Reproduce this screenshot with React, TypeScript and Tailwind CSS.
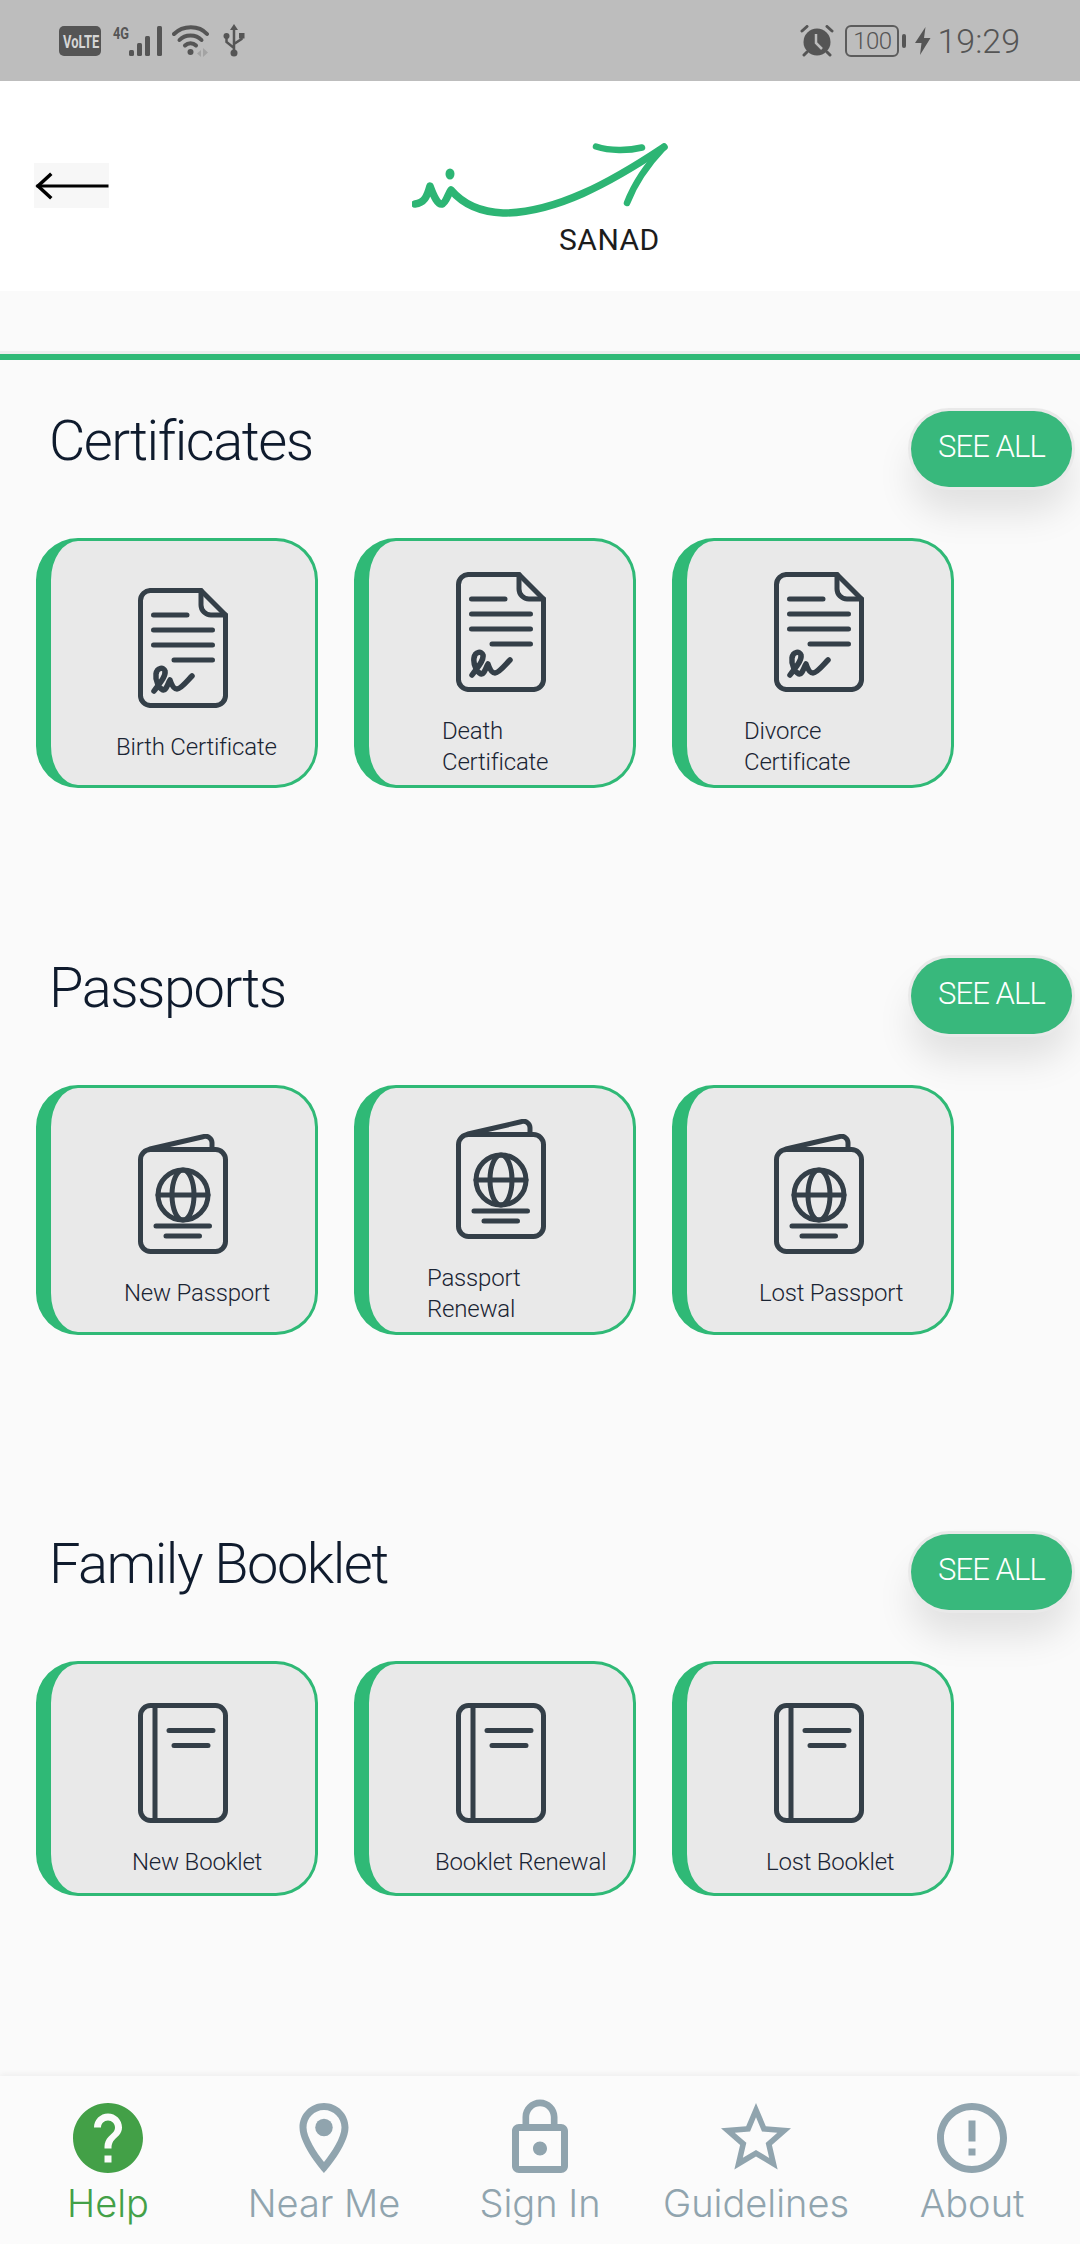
import React from "react";

const ink = "#343f48";

function DocIcon() {
  return (
    <svg width="90" height="120" viewBox="0 0 90 120" fill="none" stroke={ink} strokeWidth="5" strokeLinecap="round" strokeLinejoin="round">
      <path d="M63 2.5H13a10 10 0 0 0-10.500 10V107a10 10 0 0 0 10.500 10.500H77a10 10 0 0 0 10.500-10.500V27L63 2.500Z" />
      <path d="M63 2.500V17a10 10 0 0 0 10 10H87.500" />
      <path d="M15.500 27H49M15.500 42H74.500M15.500 57H74.500M36 72H74.500" />
      <path d="M16 103c5-7 12-14 11-20-1-4-8-4-9 3-1 7 3 14 7 16 3 1 5-7 7-10 1 3 3 9 7 9 4 0 11-9 15-13" strokeWidth="5.500" />
    </svg>
  );
}

function PassportIcon() {
  return (
    <svg width="90" height="120" viewBox="0 0 90 120" fill="none" stroke={ink} strokeWidth="5" strokeLinecap="round" strokeLinejoin="round">
      <path d="M12 15L65 2.800a6.500 6.500 0 0 1 9 6.200V15" />
      <rect x="2.500" y="15.500" width="85" height="102" rx="10" />
      <ellipse cx="45" cy="61" rx="25" ry="25" />
      <ellipse cx="45" cy="61" rx="11" ry="25" />
      <path d="M20 61H70M18 92H71.500M28 102H61.500" />
    </svg>
  );
}

function BookletIcon() {
  return (
    <svg width="90" height="120" viewBox="0 0 90 120" fill="none" stroke={ink} strokeWidth="5" strokeLinecap="round" strokeLinejoin="round">
      <rect x="2.500" y="2.500" width="85" height="115" rx="10" />
      <path d="M17 3V117" />
      <path d="M31 27.500H75M36 42.500H70" />
    </svg>
  );
}

function Card({ pad, left, height, children, text }: { pad: string; left: string; height: string; children: React.ReactNode; text: React.ReactNode }) {
  return (
    <div className={`box-border w-[282px] ${height} ${pad} shrink-0 overflow-hidden rounded-[42px] border-[3px] border-l-[15px] border-[#2fb976] bg-[#e9e9e9]`}>
      <div className="ml-[87px] h-[120px] w-[90px]">{children}</div>
      <div className={`${left} mt-[24px] text-[24px] font-light leading-[31px] tracking-[-0.2px] text-[#1a2433]`}>{text}</div>
    </div>
  );
}

function SectionHead({ title }: { title: string }) {
  return (
    <div className="flex items-start justify-between pl-[49px] pr-[8px]">
      <h2 className="mt-[0px] text-[56px] font-light leading-[60px] tracking-[-1.5px] text-[#0f1b2d]">{title}</h2>
      <button className="flex h-[76px] w-[161px] items-center justify-center rounded-full bg-[#38b87c] pb-[4px] text-[31px] font-light tracking-[-0.9px] text-white shadow-[0_0_0_3px_#e9e9e9,0_26px_36px_rgba(0,0,0,0.1)]">
        SEE ALL
      </button>
    </div>
  );
}

function NavItem({ label, active, d, extra }: { label: string; active?: boolean; d: string; extra?: React.ReactNode }) {
  return (
    <div className={`flex w-[216px] flex-col items-center ${active ? "text-[#43a047]" : "text-[#90a4ae]"}`}>
      <svg width="84" height="84" viewBox="0 0 24 24" fill="currentColor">
        <path d={d} />
        {extra}
      </svg>
      <span className="mt-[-2px] text-[38px] font-light leading-[50px]">{label}</span>
    </div>
  );
}

function StatusLeft() {
  return (
    <div className="flex items-center pl-[59px]">
      <svg width="42" height="30" viewBox="0 0 42 30">
        <rect width="42" height="30" rx="5" fill="#555" />
        <text transform="translate(4 22) scale(0.68 1)" fontSize="19" fontWeight="700" fill="#d6d6d6" fontFamily="Roboto, sans-serif">VoLTE</text>
      </svg>
      <svg className="ml-[11px]" width="51" height="32" viewBox="0 0 51 32" fill="#555">
        <text transform="translate(1 14) scale(0.8 1)" fontSize="16" fontWeight="700" fontFamily="Roboto, sans-serif">4G</text>
        <rect x="17" y="25" width="5" height="6" rx="1.500" />
        <rect x="25" y="18" width="5" height="13" rx="1.500" />
        <rect x="33" y="11" width="5" height="20" rx="1.500" />
        <rect x="45" y="1" width="5" height="30" rx="1.500" />
      </svg>
      <svg className="ml-[9px]" width="40" height="34" viewBox="0 0 40 34" fill="none" stroke="#555" strokeWidth="4" strokeLinecap="round">
        <path d="M2 10C11 1 27 1 35 10" />
        <path d="M7.500 16C13 10 24 10 29.500 16" />
        <path d="M13 21.500C16 18.500 21 18.500 24 21.500" />
        <circle cx="18.500" cy="28" r="3" fill="#555" stroke="none" />
        <path d="M29 26l-4 3.500 4 3.500z" fill="#a3a3a3" stroke="none" />
        <path d="M31 24v9l5-4.500z" fill="#a3a3a3" stroke="none" />
      </svg>
      <svg className="ml-[11px]" width="22" height="33" viewBox="0 0 22 33" fill="none" stroke="#555" strokeWidth="2.500">
        <path d="M11 4V28M11 24L3.500 18V13M11 20L18.500 15V12" />
        <path d="M11 0l4 6H7z" fill="#555" stroke="none" />
        <circle cx="11" cy="29" r="3.500" fill="#555" stroke="none" />
        <circle cx="3.500" cy="12" r="3" fill="#555" stroke="none" />
        <rect x="16" y="9" width="5.500" height="5.500" fill="#555" stroke="none" />
      </svg>
    </div>
  );
}

function StatusRight() {
  return (
    <div className="flex items-center pr-[60px] text-[#555]">
      <svg width="34" height="32" viewBox="0 0 34 32">
        <circle cx="17" cy="17" r="13.500" fill="#555" />
        <path d="M16 9V18L22 24" fill="none" stroke="#bdbdbd" strokeWidth="2.500" />
        <path d="M2 6L7 1.500M32 6L27 1.500M4 30L7 27M30 30L27 27" stroke="#555" strokeWidth="3" strokeLinecap="round" />
      </svg>
      <div className="ml-[11px] flex h-[32px] w-[54px] items-center justify-center rounded-[6px] border-[2px] border-[#5c5c5c] text-[24px] font-light leading-none tracking-[-0.5px]">
        100
      </div>
      <div className="ml-[3px] h-[14px] w-[4px] rounded-full bg-[#555]" />
      <svg className="ml-[9px]" width="16" height="28" viewBox="0 0 16 28" fill="#555">
        <path d="M10.500 0L0 16H6.500L5 28L15.500 11H9Z" />
      </svg>
      <span className="ml-[6px] text-[34px] font-light leading-none">19:29</span>
    </div>
  );
}

function Logo() {
  return (
    <div className="ml-[303px] flex h-[210px] w-[260px] flex-col">
      <svg className="mt-[59px]" width="260" height="80" viewBox="412 140 260 80" fill="none" stroke="#2db574" strokeWidth="7.500" strokeLinecap="round" strokeLinejoin="round">
        <path d="M415 204C424 203 427 197 430 186C434 197 438 205 442 204C446 203 448 194 451 190C462 203 480 212 503 213C555 213 610 183 664 147" />
        <path d="M664 147C647 165 635 182 627 203" strokeWidth="6.500" />
        <path d="M596 146.500C610 151 628 151 642 147.500" strokeWidth="6.500" />
        <ellipse cx="450" cy="174" rx="4.500" ry="5.500" fill="#2db574" stroke="none" />
      </svg>
      <span className="ml-[147px] mt-[2px] text-[30px] leading-[36px] tracking-[0.5px] text-[#1c1c1c]">SANAD</span>
    </div>
  );
}

const help = "M12 2C6.48 2 2 6.48 2 12s4.48 10 10 10 10-4.48 10-10S17.52 2 12 2zm1 17h-2v-2h2v2zm2.07-7.75l-.9.92C13.45 12.9 13 13.5 13 15h-2v-.5c0-1.1.45-2.1 1.17-2.83l1.24-1.26c.37-.36.59-.86.59-1.41 0-1.1-.9-2-2-2s-2 .9-2 2H8c0-2.21 1.79-4 4-4s4 1.79 4 4c0 .88-.36 1.68-.93 2.25z";
const place = "M12 2C8.13 2 5 5.13 5 9c0 5.25 7 13 7 13s7-7.75 7-13c0-3.87-3.13-7-7-7zM7 9c0-2.76 2.24-5 5-5s5 2.24 5 5c0 2.88-2.88 7.19-5 9.88C9.92 16.21 7 11.85 7 9z";
const lock = "M12 17c1.1 0 2-.9 2-2s-.9-2-2-2-2 .9-2 2 .9 2 2 2zm6-9h-1V6c0-2.76-2.24-5-5-5S7 3.24 7 6v2H6c-1.1 0-2 .9-2 2v10c0 1.1.9 2 2 2h12c1.1 0 2-.9 2-2V10c0-1.1-.9-2-2-2zM8.900 6c0-1.710 1.390-3.100 3.100-3.100s3.100 1.390 3.100 3.100v2H8.900V6zM18 20H6V10h12v10z";
const star = "M22 9.240l-7.190-.620L12 2 9.190 8.630 2 9.240l5.460 4.730L5.820 21 12 17.270 18.180 21l-1.630-7.030L22 9.240zM12 15.400l-3.760 2.270 1-4.280-3.320-2.880 4.380-.380L12 6.100l1.710 4.040 4.380.380-3.320 2.880 1 4.280L12 15.400z";
const info = "M11 15h2v2h-2zm0-8h2v6h-2zm.990-5C6.470 2 2 6.480 2 12s4.470 10 9.990 10C17.520 22 22 17.520 22 12S17.520 2 11.990 2zM12 20c-4.420 0-8-3.580-8-8s3.580-8 8-8 8 3.580 8 8-3.580 8-8 8z";

export default function App() {
  return (
    <div className="flex h-[2244px] w-[1080px] flex-col overflow-hidden bg-[#fafafa] font-['Roboto',sans-serif]">
      <div className="flex h-[81px] items-center justify-between bg-[#bdbdbd]">
        <StatusLeft />
        <StatusRight />
      </div>

      <header className="flex h-[210px] items-start bg-white">
        <div className="ml-[34px] mt-[82px] flex h-[45px] w-[75px] items-center bg-[#f7f7f7]">
          <svg width="75" height="45" viewBox="0 0 75 45" fill="none" stroke="#000" strokeLinecap="square">
            <path d="M4 23H73" strokeWidth="3" />
            <path d="M16 12L4 23L16 34" strokeWidth="3.500" />
          </svg>
        </div>
        <Logo />
      </header>

      <div className="mt-[60px] h-[9px] border-t-[3px] border-t-[#eeeeee] bg-[#2fb976]" />

      <main className="flex-1">
        <section className="pt-[51px]">
          <SectionHead title="Certificates" />
          <div className="mt-[51px] flex gap-[36px] pl-[36px]">
            <Card height="h-[250px]" pad="pt-[47px]" left="pl-[65px]" text="Birth Certificate"><DocIcon /></Card>
            <Card height="h-[250px]" pad="pt-[31px]" left="pl-[73px]" text={<>Death<br />Certificate</>}><DocIcon /></Card>
            <Card height="h-[250px]" pad="pt-[31px]" left="pl-[57px]" text={<>Divorce<br />Certificate</>}><DocIcon /></Card>
          </div>
        </section>

        <section className="pt-[170px]">
          <SectionHead title="Passports" />
          <div className="mt-[51px] flex gap-[36px] pl-[36px]">
            <Card height="h-[250px]" pad="pt-[46px]" left="pl-[73px]" text="New Passport"><PassportIcon /></Card>
            <Card height="h-[250px]" pad="pt-[31px]" left="pl-[58px]" text={<>Passport<br />Renewal</>}><PassportIcon /></Card>
            <Card height="h-[250px]" pad="pt-[46px]" left="pl-[72px]" text="Lost Passport"><PassportIcon /></Card>
          </div>
        </section>

        <section className="pt-[199px]">
          <SectionHead title="Family Booklet" />
          <div className="mt-[51px] flex gap-[36px] pl-[36px]">
            <Card height="h-[235px]" pad="pt-[39px]" left="pl-[81px]" text="New Booklet"><BookletIcon /></Card>
            <Card height="h-[235px]" pad="pt-[39px]" left="pl-[66px]" text="Booklet Renewal"><BookletIcon /></Card>
            <Card height="h-[235px]" pad="pt-[39px]" left="pl-[79px]" text="Lost Booklet"><BookletIcon /></Card>
          </div>
        </section>
      </main>

      <nav className="flex h-[168px] bg-[#fbfbfb] pt-[20px] shadow-[0_-2px_6px_rgba(0,0,0,0.05)] font-['Inter',sans-serif]">
        <NavItem label="Help" active d={help} />
        <NavItem label="Near Me" d={place} extra={<circle cx="12" cy="9" r="2.500" />} />
        <NavItem label="Sign In" d={lock} />
        <NavItem label="Guidelines" d={star} />
        <NavItem label="About" d={info} />
      </nav>
    </div>
  );
}
